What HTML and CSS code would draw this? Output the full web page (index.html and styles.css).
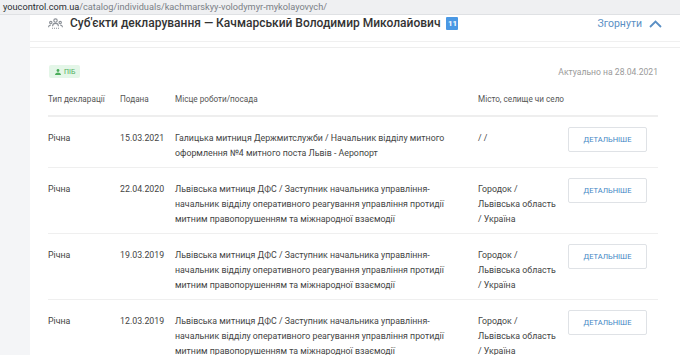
FILE: index.html
```html
<!DOCTYPE html>
<html lang="uk">
<head>
    <meta charset="UTF-8">
    <meta name="viewport" content="width=device-width, initial-scale=1.0">
    <title>Суб'єкти декларування</title>
    <link rel="stylesheet" href="styles.css">
</head>
<body>
    <div class="urlbar"><span class="host">youcontrol.com.ua</span>/catalog/individuals/kachmarskyy-volodymyr-mykolayovych/</div>
    <div class="page">
        <div class="card">
            <div class="card-head">
                <div class="title">
                    <svg class="users-icon" width="15" height="11" viewBox="0 0 15 11" fill="none" stroke="#8a8f96" stroke-width="1.1">
                        <circle cx="7.5" cy="2.6" r="1.7"/>
                        <path d="M4.6 8.2c0-1.7 1.3-2.8 2.9-2.8s2.9 1.1 2.9 2.8"/>
                        <circle cx="2.8" cy="4.6" r="1.2"/>
                        <path d="M0.6 9.2c0-1.3 1-2.1 2.2-2.1"/>
                        <circle cx="12.2" cy="4.6" r="1.2"/>
                        <path d="M14.4 9.2c0-1.3-1-2.1-2.2-2.1"/>
                        <path d="M4 10.3h7" stroke-dasharray="1 1"/>
                    </svg>
                    <span>Суб'єкти декларування — Качмарський Володимир Миколайович</span>
                    <span class="count">11</span>
                </div>
                <div class="collapse">
                    Згорнути
                    <svg width="13" height="8" viewBox="0 0 13 8" fill="none" stroke="#5a8fc4" stroke-width="1.8">
                        <path d="M1 7l5.5-5.5L12 7"/>
                    </svg>
                </div>
            </div>
            <div class="card-body">
                <div class="meta">
                    <span class="tag">
                        <svg width="6" height="6" viewBox="0 0 6 6" fill="#4cae5b">
                            <circle cx="3" cy="1.5" r="1.4"/>
                            <path d="M0 6c0-1.8 1.3-2.6 3-2.6S6 4.2 6 6z"/>
                        </svg>
                        ПІБ
                    </span>
                    <span class="actual">Актуально на 28.04.2021</span>
                </div>
                <table class="decl">
                    <thead>
                        <tr>
                            <th class="c-type">Тип декларації</th>
                            <th class="c-date">Подана</th>
                            <th class="c-place">Місце роботи/посада</th>
                            <th class="c-city">Місто, селище чи село</th>
                            <th class="c-btn"></th>
                        </tr>
                    </thead>
                    <tbody>
                        <tr>
                            <td>Річна</td>
                            <td>15.03.2021</td>
                            <td class="c-place">Галицька митниця Держмитслужби / Начальник відділу митного оформлення №4 митного поста Львів - Аеропорт</td>
                            <td class="c-city">/ /</td>
                            <td class="c-btn"><button class="more">ДЕТАЛЬНІШЕ</button></td>
                        </tr>
                        <tr>
                            <td>Річна</td>
                            <td>22.04.2020</td>
                            <td class="c-place">Львівська митниця ДФС / Заступник начальника управління-начальник відділу оперативного реагування управління протидії митним правопорушенням та міжнародної взаємодії</td>
                            <td class="c-city">Городок / Львівська область / Україна</td>
                            <td class="c-btn"><button class="more">ДЕТАЛЬНІШЕ</button></td>
                        </tr>
                        <tr>
                            <td>Річна</td>
                            <td>19.03.2019</td>
                            <td class="c-place">Львівська митниця ДФС / Заступник начальника управління-начальник відділу оперативного реагування управління протидії митним правопорушенням та міжнародної взаємодії</td>
                            <td class="c-city">Городок / Львівська область / Україна</td>
                            <td class="c-btn"><button class="more">ДЕТАЛЬНІШЕ</button></td>
                        </tr>
                        <tr>
                            <td>Річна</td>
                            <td>12.03.2019</td>
                            <td class="c-place">Львівська митниця ДФС / Заступник начальника управління-начальник відділу оперативного реагування управління протидії митним правопорушенням та міжнародної взаємодії</td>
                            <td class="c-city">Городок / Львівська область / Україна</td>
                            <td class="c-btn"><button class="more">ДЕТАЛЬНІШЕ</button></td>
                        </tr>
                    </tbody>
                </table>
            </div>
        </div>
    </div>
</body>
</html>
```

FILE: styles.css
```css
body {
    margin: 0;
    height: 355px;
    overflow: hidden;
    background-color: #f4f5f7;
    font-family: Roboto, "Liberation Sans", sans-serif;
    color: #444;
}

.urlbar {
    height: 14px;
    line-height: 13px;
    padding-left: 3px;
    font-size: 9.2px;
    color: #7a7f86;
    background-color: #eff0f2;
    border-bottom: 1px solid #dfe1e4;
    white-space: nowrap;
}

.urlbar .host {
    color: #2a2d31;
}

.page {
    padding-left: 30px;
}

.card {
    background-color: #ffffff;
    height: 340px;
}

.card-head {
    display: flex;
    justify-content: space-between;
    align-items: flex-start;
    height: 25px;
    padding: 1px 18px 0 18px;
    border-bottom: 1px solid #f0f0f0;
}

.title {
    display: flex;
    align-items: center;
    font-size: 12px;
    font-weight: 500;
    color: #333;
    line-height: 15px;
}

.users-icon {
    margin-right: 7px;
}

.count {
    margin-left: 6px;
    width: 12px;
    height: 13px;
    line-height: 13px;
    text-align: center;
    font-size: 8px;
    font-weight: 700;
    color: #fff;
    background-color: #4a98e4;
    border-radius: 1px;
}

.collapse {
    display: flex;
    align-items: center;
    gap: 7px;
    font-size: 10.5px;
    line-height: 15px;
    color: #5a8fc4;
    padding-right: 0;
}

.card-body {
    margin-top: 5px;
    border-top: 1px solid #eeeeee;
    padding: 17px 22px 0 18px;
}

.meta {
    display: flex;
    justify-content: space-between;
    align-items: center;
    height: 13px;
}

.tag {
    display: flex;
    align-items: center;
    gap: 3px;
    height: 13px;
    padding: 0 5px 0 6px;
    margin-left: 1px;
    font-size: 7px;
    color: #4cae5b;
    background-color: #e4f6e8;
    border-radius: 2px;
}

.actual {
    font-size: 8.6px;
    color: #9a9a9a;
}

.decl {
    width: 610px;
    margin-top: 5px;
    border-collapse: collapse;
    table-layout: fixed;
    font-size: 8.8px;
}

.decl th {
    height: 32px;
    padding: 0;
    text-align: left;
    font-weight: 400;
    font-size: 8.2px;
    color: #555;
    border-bottom: 2px solid #eeeeee;
}

.decl td {
    padding: 14px 0 6px 0;
    line-height: 15px;
    vertical-align: top;
    color: #444;
    border-bottom: 1px solid #efefef;
}

.c-type { width: 72px; }
.c-date { width: 55px; }
.c-place { width: 303px; }
.c-city { width: 90px; }
.c-btn { width: 90px; }

.decl td.c-place {
    padding-right: 33px;
}

.decl td.c-city {
    padding-right: 12px;
}

.decl td.c-btn {
    padding-top: 10px;
}

.more {
    display: block;
    width: 79px;
    height: 25px;
    padding: 0;
    font-family: Roboto, "Liberation Sans", sans-serif;
    font-size: 7.5px;
    color: #3f86c4;
    background-color: #fff;
    border: 1px solid #dfe2e6;
    border-radius: 2px;
    cursor: pointer;
}
```
